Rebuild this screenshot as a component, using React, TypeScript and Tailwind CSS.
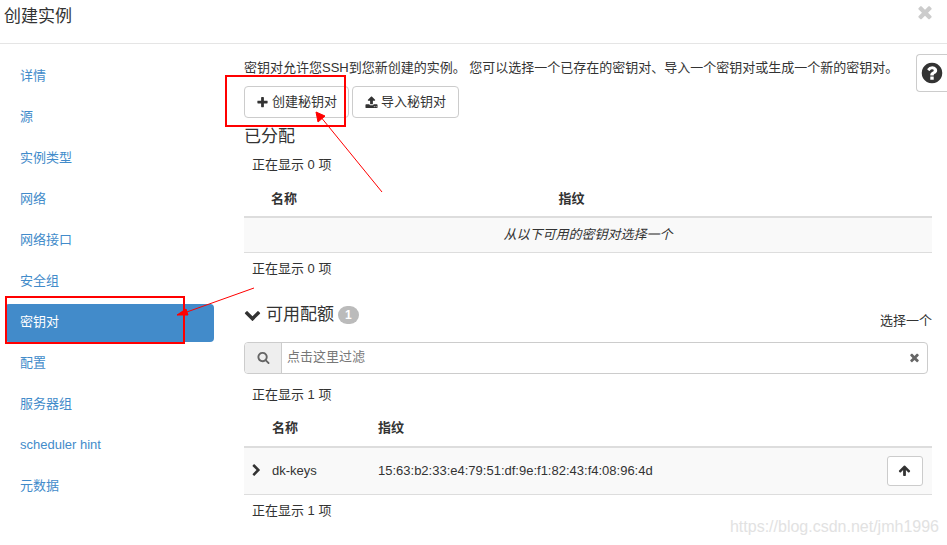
import React from "react";
import { useState } from "react";

const icons = {
  plus: "M1600 736v192q0 40-28 68t-68 28h-416v416q0 40-28 68t-68 28h-192q-40 0-68-28t-28-68v-416h-416q-40 0-68-28t-28-68v-192q0-40 28-68t68-28h416v-416q0-40 28-68t68-28h192q40 0 68 28t28 68v416h416q40 0 68 28t28 68z",
  times:
    "M1490 1322q0 40-28 68l-136 136q-28 28-68 28t-68-28l-294-294-294 294q-28 28-68 28t-68-28l-136-136q-28-28-28-68t28-68l294-294-294-294q-28-28-28-68t28-68l136-136q28-28 68-28t68 28l294 294 294-294q28-28 68-28t68 28l136 136q28 28 28 68t-28 68l-294 294 294 294q28 28 28 68z",
  chevronDown:
    "M1683 808l-742 741q-19 19-45 19t-45-19l-742-741q-19-19-19-45.5t19-45.5l166-165q19-19 45-19t45 19l531 531 531-531q19-19 45-19t45 19l166 165q19 19 19 45.5t-19 45.5z",
  chevronRight:
    "M1363 877l-742 742q-19 19-45 19t-45-19l-166-166q-19-19-19-45t19-45l531-531-531-531q-19-19-19-45t19-45l166-166q19-19 45-19t45 19l742 742q19 19 19 45t-19 45z",
  arrowUp:
    "M1675 971q0 51-37 90l-75 75q-38 38-91 38-54 0-90-38l-294-293v704q0 52-37.5 84.5t-90.5 32.5h-128q-53 0-90.5-32.5t-37.5-84.5v-704l-294 293q-36 38-90 38t-90-38l-75-75q-38-38-38-90 0-53 38-91l651-651q35-37 90-37 54 0 91 37l651 651q37 39 37 91z",
  search:
    "M1216 832q0-185-131.5-316.5t-316.5-131.5-316.5 131.5-131.5 316.5 131.5 316.5 316.5 131.5 316.5-131.5 131.5-316.5zm512 832q0 52-38 90t-90 38q-54 0-90-38l-343-342q-179 124-399 124-143 0-273.5-55.5t-225-150-150-225-55.5-273.5 55.5-273.5 150-225 225-150 273.5-55.5 273.5 55.5 225 150 150 225 55.5 273.5q0 220-124 399l343 343q37 37 37 90z",
  upload:
    "M1344 1472q0-26-19-45t-45-19-45 19-19 45 19 45 45 19 45-19 19-45zm256 0q0-26-19-45t-45-19-45 19-19 45 19 45 45 19 45-19 19-45zm128-224v320q0 40-28 68t-68 28h-1472q-40 0-68-28t-28-68v-320q0-40 28-68t68-28h427q21 56 70.5 92t110.5 36h256q61 0 110.5-36t70.5-92h427q40 0 68 28t28 68zm-325-648q-17 40-59 40h-256v448q0 26-19 45t-45 19h-256q-26 0-45-19t-19-45v-448h-256q-42 0-59-40-17-39 14-69l448-448q18-19 45-19t45 19l448 448q31 30 14 69z",
  question:
    "M1024 1376v-192q0-14-9-23t-23-9h-192q-14 0-23 9t-9 23v192q0 14 9 23t23 9h192q14 0 23-9t9-23zm256-672q0-88-55.5-163t-138.5-116-170-41q-243 0-371 213-15 24 8 42l132 100q7 6 19 6 16 0 25-12 53-68 86-92 34-24 86-24 48 0 85.5 26t37.5 59q0 38-20 61t-68 45q-63 28-115.5 86.5t-52.5 125.5v36q0 14 9 23t23 9h192q14 0 23-9t9-23q0-19 21.5-49.5t54.5-49.5q32-18 49-28.5t46-35 44.5-48 28-60.5 12.5-81zm384 192q0 209-103 385.5t-279.5 279.5-385.5 103-385.5-103-279.5-279.5-103-385.5 103-385.5 279.5-279.5 385.5-103 385.5 103 279.5 279.5 103 385.5z",
};

const Icon = ({
  name,
  className = "h-[13px] w-[13px]",
}: {
  name: keyof typeof icons;
  className?: string;
}) => (
  <svg
    viewBox="0 0 1792 1792"
    fill="currentColor"
    aria-hidden="true"
    className={className}
  >
    <path d={icons[name]} />
  </svg>
);

const steps = [
  "详情",
  "源",
  "实例类型",
  "网络",
  "网络接口",
  "安全组",
  "密钥对",
  "配置",
  "服务器组",
  "scheduler hint",
  "元数据",
];

const keyPairs = [
  {
    name: "dk-keys",
    fingerprint: "15:63:b2:33:e4:79:51:df:9e:f1:82:43:f4:08:96:4d",
  },
];

const Header = () => {
  return (
    <header className="flex h-11 items-start justify-between border-b border-[#e5e5e5] pl-1 pr-3">
      <h1 className="pt-[7px] text-[17px] leading-5">创建实例</h1>
      <button type="button" aria-label="关闭" className="pt-[2px] text-[#ccc]">
        <Icon name="times" className="h-5 w-5" />
      </button>
    </header>
  );
};

const StepNav = ({
  active,
  onSelect,
}: {
  active: string;
  onSelect: (step: string) => void;
}) => {
  return (
    <nav className="w-[214px] shrink-0 pl-[5px] pt-[14px]">
      <ul className="flex flex-col gap-[3px]">
        {steps.map((step) => (
          <li key={step}>
            <a
              href="#"
              onClick={() => onSelect(step)}
              className={
                step === active
                  ? "block rounded bg-[#428bca] pb-[10px] pl-[15px] pt-2 leading-5 text-white"
                  : "block rounded pb-[10px] pl-[15px] pt-2 leading-5 text-[#428bca]"
              }
            >
              {step}
            </a>
          </li>
        ))}
      </ul>
    </nav>
  );
};

const Allocated = () => {
  return (
    <section>
      <h2 className="mt-[9px] text-[17px] leading-5">已分配</h2>
      <p className="mt-2 pl-2 leading-5">正在显示 0 项</p>
      <table className="mt-[6px] w-full table-fixed border-collapse text-left">
        <thead>
          <tr className="h-9 border-b-2 border-[#ddd]">
            <th className="w-[45%] pl-[27px]">名称</th>
            <th className="pl-[5px]">指纹</th>
          </tr>
        </thead>
        <tbody>
          <tr className="h-[35px] border-b border-[#ddd] bg-[#f9f9f9]">
            <td colSpan={2} className="text-center italic">
              从以下可用的密钥对选择一个
            </td>
          </tr>
        </tbody>
      </table>
      <p className="mt-[6px] pl-2 leading-5">正在显示 0 项</p>
    </section>
  );
};

const Available = () => {
  const [filter, setFilter] = useState("");

  return (
    <section className="mt-6">
      <div className="flex items-start justify-between">
        <h2 className="flex items-center text-[17px] leading-6">
          <Icon name="chevronDown" className="mr-[5px] h-[17px] w-[17px]" />
          可用配额
          <span className="ml-1 rounded-full bg-[#bbb] px-[7px] text-xs font-bold leading-[18px] text-white">
            {keyPairs.length}
          </span>
        </h2>
        <span className="pt-2 leading-5">选择一个</span>
      </div>
      <div className="mr-1 mt-[11px] flex h-8 overflow-hidden rounded border border-[#ccc]">
        <label
          htmlFor="filter"
          aria-label="过滤"
          className="flex w-[37px] items-center justify-center border-r border-[#ccc] bg-[#eee] text-[#666]"
        >
          <Icon name="search" />
        </label>
        <input
          id="filter"
          type="text"
          placeholder="点击这里过滤"
          value={filter}
          onChange={(e) => setFilter(e.target.value)}
          className="min-w-0 flex-1 px-[5px] pb-[2px] outline-none placeholder:text-[#777]"
        />
        <button
          type="button"
          aria-label="清除"
          onClick={() => setFilter("")}
          className="px-[6px] text-[#666]"
        >
          <Icon name="times" />
        </button>
      </div>
      <p className="mt-[11px] pl-2 leading-5">正在显示 1 项</p>
      <table className="mt-[6px] w-full border-collapse text-left">
        <thead>
          <tr className="h-9 border-b-2 border-[#ddd]">
            <th className="w-7" />
            <th className="w-[106px]">名称</th>
            <th>指纹</th>
            <th className="w-[45px]" />
          </tr>
        </thead>
        <tbody>
          {keyPairs.map((item) => (
            <tr
              key={item.name}
              className="h-12 border-b border-[#ddd] bg-[#f9f9f9]"
            >
              <td className="pl-[6px]">
                <button type="button" aria-label="展开" className="block">
                  <Icon name="chevronRight" />
                </button>
              </td>
              <td>{item.name}</td>
              <td>{item.fingerprint}</td>
              <td>
                <button
                  type="button"
                  aria-label="选择"
                  className="flex h-[30px] w-9 items-center justify-center rounded-[3px] border border-[#ccc] bg-white pr-[2px]"
                >
                  <Icon name="arrowUp" />
                </button>
              </td>
            </tr>
          ))}
        </tbody>
      </table>
      <p className="mt-[6px] pl-2 leading-5">正在显示 1 项</p>
    </section>
  );
};

// red boxes and arrows drawn over the dialog
const Marks = () => {
  return (
    <svg
      className="pointer-events-none absolute left-0 top-0"
      width="400"
      height="360"
      fill="none"
      stroke="#f00"
      aria-hidden="true"
    >
      <rect x="226" y="76" width="119" height="50" strokeWidth="2" />
      <rect x="6" y="297" width="178" height="46" strokeWidth="2" />
      <path d="M382 192L320 116M254 288L184 313" />
      <path d="M316 112l9 4-7 6zM177 315l9-6 2 6z" fill="#f00" />
    </svg>
  );
};

const App = () => {
  const [step, setStep] = useState("密钥对");

  return (
    <div className="relative min-h-screen overflow-hidden bg-white font-['Liberation_Sans','Noto_Sans_CJK_SC',sans-serif] text-[13px] text-[#333]">
      <Header />
      <div className="flex">
        <StepNav active={step} onSelect={setStep} />
        <main className="min-w-0 flex-1 pl-[30px] pr-[15px] pt-[14px]">
          <p className="leading-5">
            密钥对允许您SSH到您新创建的实例。
            您可以选择一个已存在的密钥对、导入一个密钥对或生成一个新的密钥对。
          </p>
          <div className="mt-2 flex gap-[3px]">
            <button
              type="button"
              className="flex h-8 items-center gap-[3px] rounded border border-[#ccc] px-[11px]"
            >
              <Icon name="plus" />
              创建秘钥对
            </button>
            <button
              type="button"
              className="flex h-8 items-center gap-[3px] rounded border border-[#ccc] px-3"
            >
              <Icon name="upload" />
              导入秘钥对
            </button>
          </div>
          <Allocated />
          <Available />
        </main>
      </div>
      <button
        type="button"
        aria-label="帮助"
        className="absolute right-0 top-[54px] flex h-[38px] w-[31px] items-center justify-center rounded-l border border-r-0 border-[#ccc] bg-white"
      >
        <Icon name="question" className="h-6 w-6" />
      </button>
      <Marks />
      <span className="absolute bottom-2 right-2 text-base leading-5 text-[#e2e2e2]">
        https://blog.csdn.net/jmh1996
      </span>
    </div>
  );
};

export default App;
